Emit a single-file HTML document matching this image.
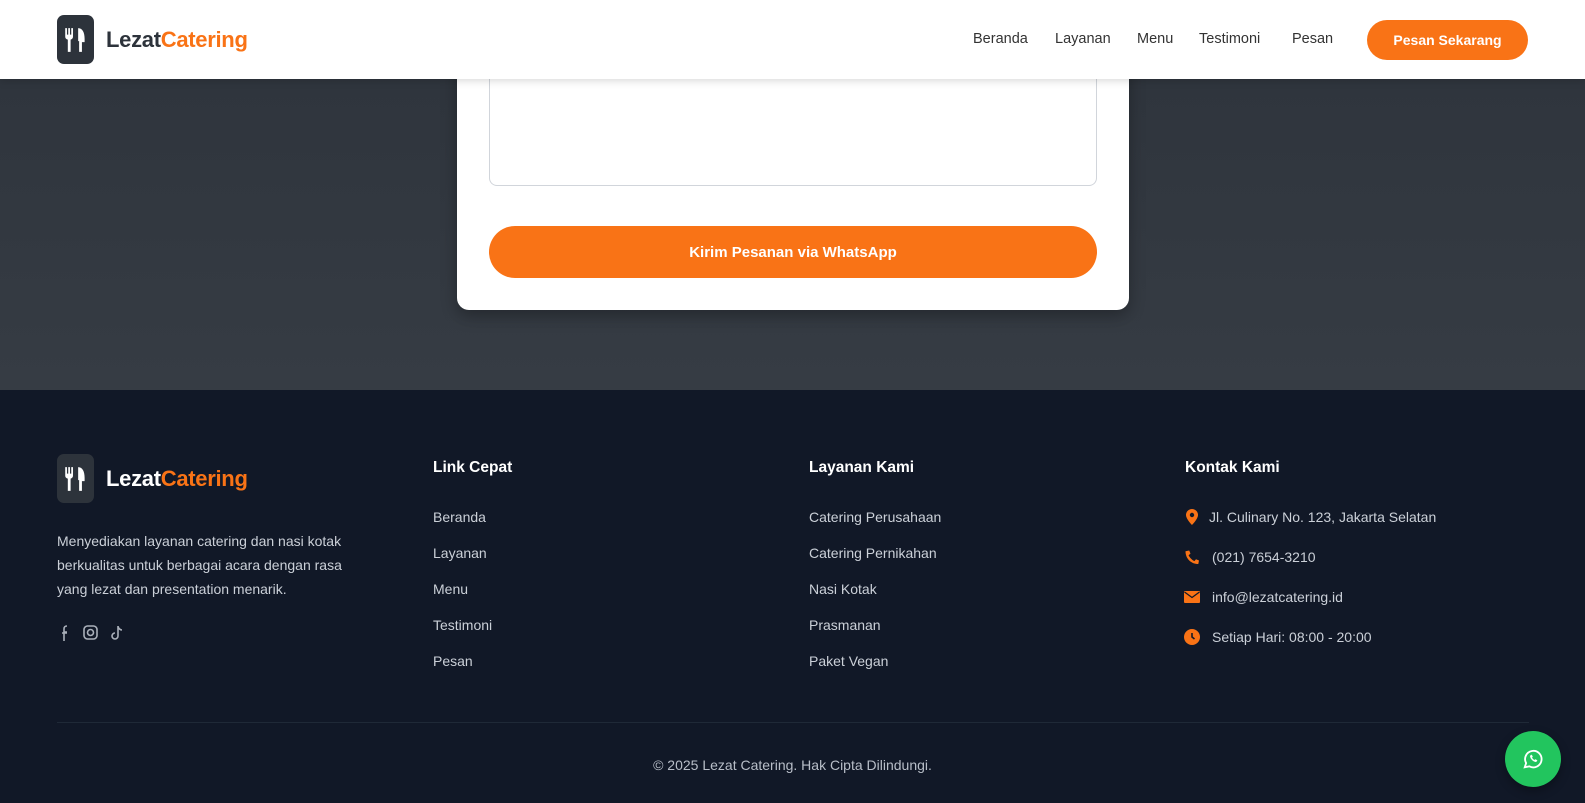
<!DOCTYPE html>
<html><head><meta charset="utf-8"><style>
*{margin:0;padding:0;box-sizing:border-box}
body{width:1585px;height:803px;overflow:hidden;font-family:"Liberation Sans",sans-serif;background:#111827;position:relative}
.top{position:absolute;left:0;top:0;width:1585px;height:390px;background:linear-gradient(180deg,#2d333b,#363c44)}
.nav{position:absolute;left:0;top:0;width:1585px;height:79px;background:#fff;box-shadow:0 2px 8px rgba(0,0,0,.15);z-index:5}
.logo{position:absolute;display:flex;align-items:center}
.lbox{width:37px;height:49px;border-radius:7px;background:#2d333b;display:flex;align-items:center;justify-content:center}
.lt{font-weight:bold;font-size:22px;margin-left:12px;letter-spacing:-.3px}
.lt span{color:#f97316}
.menu{position:absolute;top:31px;font-size:14.5px;color:#333}
.btn{position:absolute;left:1367px;top:20px;width:161px;height:40px;border-radius:20px;background:#f97316;color:#fff;font-weight:bold;font-size:14px;display:flex;align-items:center;justify-content:center}
.card{position:absolute;left:457px;top:40px;width:672px;height:270px;background:#fff;border-radius:0 0 12px 12px;box-shadow:0 6px 16px rgba(0,0,0,.3)}
.ta{position:absolute;left:32px;top:20px;width:608px;height:126px;border:1px solid #d1d5db;border-top:none;border-radius:0 0 8px 8px}
.send{position:absolute;left:32px;top:186px;width:608px;height:52px;border-radius:26px;background:#f97316;color:#fff;font-weight:bold;font-size:15px;display:flex;align-items:center;justify-content:center}
.h{position:absolute;top:459px;color:#fff;font-weight:bold;font-size:15.5px}
.l{position:absolute;color:#cbd0d8;font-size:14px}
.c{position:absolute;color:#cbd0d8;font-size:14px}
.ic{position:absolute;width:16px;height:16px}
</style></head><body>
<div class="top"></div>
<div class="nav">
 <div class="logo" style="left:57px;top:15px"><div class="lbox"><svg width="26" height="28" viewBox="0 0 24 26" fill="#fff"><path d="M2 2h1.6v6h1.2V2h1.6v6h1.2V2h1.6v8c0 1.5-1 2.4-2.2 2.6V24H4.4V12.6C3 12.4 2 11.5 2 10z"/><path d="M14 2c4 0 6 4 6 10v3h-2.5v9h-2.6V14H14z"/></svg></div><div class="lt" style="color:#2d333b">Lezat<span>Catering</span></div></div>
 <div class="menu" style="left:973px">Beranda</div>
 <div class="menu" style="left:1055px">Layanan</div>
 <div class="menu" style="left:1137px">Menu</div>
 <div class="menu" style="left:1199px">Testimoni</div>
 <div class="menu" style="left:1292px">Pesan</div>
 <div class="btn">Pesan Sekarang</div>
</div>
<div class="card"><div class="ta"></div><div class="send">Kirim Pesanan via WhatsApp</div></div>

<div class="logo" style="left:57px;top:454px"><div class="lbox" style="background:#2d333b"><svg width="26" height="28" viewBox="0 0 24 26" fill="#fff"><path d="M2 2h1.6v6h1.2V2h1.6v6h1.2V2h1.6v8c0 1.5-1 2.4-2.2 2.6V24H4.4V12.6C3 12.4 2 11.5 2 10z"/><path d="M14 2c4 0 6 4 6 10v3h-2.5v9h-2.6V14H14z"/></svg></div><div class="lt" style="color:#fff">Lezat<span>Catering</span></div></div>
<div class="l" style="left:57px;top:529px;width:312px;line-height:24px">Menyediakan layanan catering dan nasi kotak berkualitas untuk berbagai acara dengan rasa yang lezat dan presentation menarik.</div>
<svg style="position:absolute;left:56px;top:624px" width="80" height="18" viewBox="0 0 80 18" fill="none" stroke="#aab0ba" stroke-width="1.6"><path d="M8 17V8h3M6 9h5M8 8V5c0-2 1-3 3-3" /><rect x="28" y="2" width="13" height="13" rx="3.5"/><circle cx="34.5" cy="8.5" r="3"/><path d="M62 2v10a3 3 0 1 1-3-3M62 2c0 2 2 4 4 4"/></svg>

<div class="h" style="left:433px">Link Cepat</div>
<div class="l" style="left:433px;top:509px">Beranda</div>
<div class="l" style="left:433px;top:545px">Layanan</div>
<div class="l" style="left:433px;top:581px">Menu</div>
<div class="l" style="left:433px;top:617px">Testimoni</div>
<div class="l" style="left:433px;top:653px">Pesan</div>

<div class="h" style="left:809px">Layanan Kami</div>
<div class="l" style="left:809px;top:509px">Catering Perusahaan</div>
<div class="l" style="left:809px;top:545px">Catering Pernikahan</div>
<div class="l" style="left:809px;top:581px">Nasi Kotak</div>
<div class="l" style="left:809px;top:617px">Prasmanan</div>
<div class="l" style="left:809px;top:653px">Paket Vegan</div>

<div class="h" style="left:1185px">Kontak Kami</div>
<svg class="ic" style="left:1184px;top:509px" viewBox="0 0 16 16"><path fill="#f97316" d="M8 0a6 6 0 0 0-6 6c0 4 6 10 6 10s6-6 6-10a6 6 0 0 0-6-6zm0 8.2A2.2 2.2 0 1 1 8 3.8a2.2 2.2 0 0 1 0 4.4z"/></svg>
<div class="c" style="left:1209px;top:509px">Jl. Culinary No. 123, Jakarta Selatan</div>
<svg class="ic" style="left:1184px;top:549px" viewBox="0 0 16 16"><path fill="#f97316" d="M15 11.5l-3-1.3-1.6 1.9C8 11 5.7 8.5 4.6 6.2L6.5 4.6 5.2 1.5 1.5 2.2C1.5 9.5 7 15 14.3 15z"/></svg>
<div class="c" style="left:1212px;top:549px">(021) 7654-3210</div>
<svg class="ic" style="left:1184px;top:589px" viewBox="0 0 16 16"><rect x="0" y="2" width="16" height="12" rx="1" fill="#f97316"/><path d="M0.5 3l7.5 5.5L15.5 3" fill="none" stroke="#111827" stroke-width="1.3"/></svg>
<div class="c" style="left:1212px;top:589px">info@lezatcatering.id</div>
<svg class="ic" style="left:1184px;top:629px" viewBox="0 0 16 16"><circle cx="8" cy="8" r="8" fill="#f97316"/><path d="M8 4v4l2.5 2" stroke="#111827" stroke-width="1.6" fill="none"/></svg>
<div class="c" style="left:1212px;top:629px">Setiap Hari: 08:00 - 20:00</div>

<div style="position:absolute;left:57px;top:722px;width:1472px;height:1px;background:#1f2937"></div>
<div class="l" style="left:0;width:1585px;text-align:center;top:757px;color:#b8bec8">© 2025 Lezat Catering. Hak Cipta Dilindungi.</div>
<div style="position:absolute;left:1505px;top:731px;width:56px;height:56px;border-radius:50%;background:#22c55e;box-shadow:0 4px 10px rgba(0,0,0,.3);display:flex;align-items:center;justify-content:center"><svg width="22" height="22" viewBox="0 0 24 24" fill="none" stroke="#fff" stroke-width="2"><path d="M3 21l1.5-4.5A9 9 0 1 1 8 20z"/><path d="M9 8.5c0 3 3 6.5 6.5 6.5l1-1.5-2-1-1 .8c-1-.5-2.3-1.8-2.8-2.8l.8-1-1-2z" fill="#fff" stroke-width="0.5"/></svg></div>
</body></html>
